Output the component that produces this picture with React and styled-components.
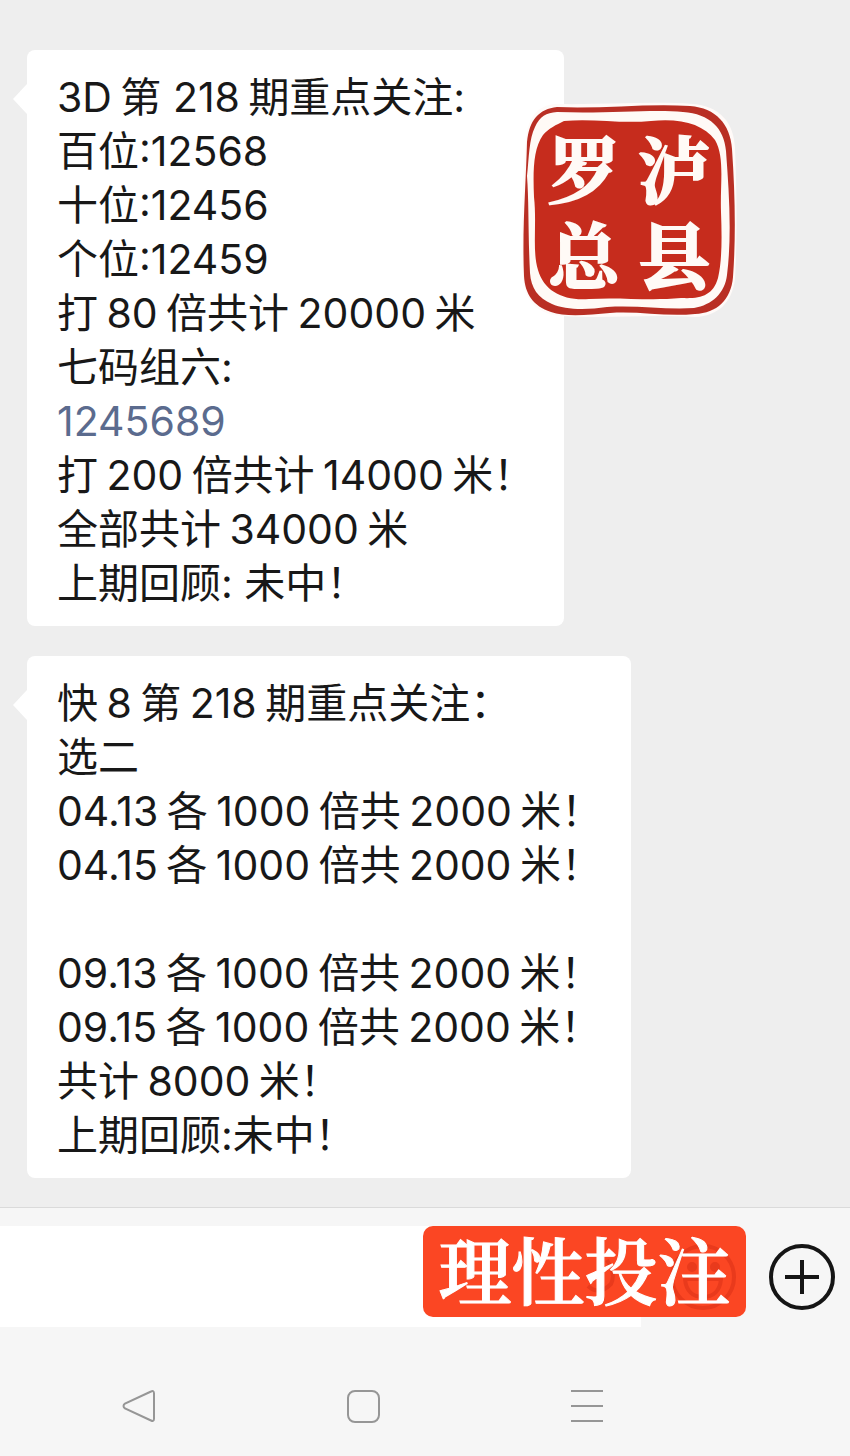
import React, { Fragment } from 'react';
import styled, { createGlobalStyle } from 'styled-components';

const GlobalStyle = createGlobalStyle`
  *, *::before, *::after { box-sizing: border-box; }
  body {
    margin: 0;
    background: #eeeeee;
    font-family: Inter, "Noto Sans CJK SC", sans-serif;
    color: #181818;
  }
`;

const Screen = styled.div`
  display: flex;
  flex-direction: column;
  min-height: 100vh;
`;

const Chat = styled.main`
  position: relative;
  flex: 1;
  display: flex;
  flex-direction: column;
  align-items: flex-start;
  gap: 30px;
  padding: 50px 27px 29px;
`;

const Bubble = styled.article`
  position: relative;
  width: ${(p) => p.$width};
  padding: 20px 0 16px 30px;
  border-radius: 8px;
  background: #ffffff;
  font-size: 41px;
  line-height: 54px;
  white-space: nowrap;

  &::before {
    content: "";
    position: absolute;
    left: -14px;
    top: 34px;
    border: solid transparent;
    border-width: 15px 14px 15px 0;
    border-right-color: #ffffff;
  }
`;

const Line = styled.p`
  margin: 0;
  min-height: 54px;
`;

/* Narrow space between Chinese characters and numerals */
const ThinSpace = styled.span`
  font-size: 30px;
  line-height: 1;
`;

const NumberLink = styled.a`
  color: #5b6b8e;
  text-decoration: none;
`;

const Seal = styled.div`
  position: absolute;
  left: 521px;
  top: 101px;
  width: 216px;
  height: 218px;
`;

const SealArt = styled.svg`
  display: block;
  width: 100%;
  height: 100%;
`;

const SealText = styled.div`
  position: absolute;
  inset: 22px 18px 24px;
  display: grid;
  grid-template-columns: 1fr 1fr;
  place-items: center;
  color: #fffaf6;
  -webkit-text-stroke: 2px #fffaf6;
  font-family: "Noto Serif CJK SC", "Noto Sans CJK SC", serif;
  font-size: 72px;
  font-weight: 700;
  line-height: 84px;
`;

const Composer = styled.footer`
  position: relative;
  display: flex;
  align-items: center;
  gap: 128px;
  padding: 18px 15px 18px 0;
  border-top: 1px solid #dadada;
  background: #f6f6f6;
`;

const MessageInput = styled.input`
  flex: 1;
  min-width: 0;
  height: 101px;
  padding: 0 30px;
  border: 0;
  outline: 0;
  background: #ffffff;
  font: inherit;
  font-size: 41px;
`;

const IconButton = styled.button`
  display: flex;
  padding: 0;
  border: 0;
  background: none;
  color: ${(p) => p.$color};
`;

const Banner = styled.div`
  position: absolute;
  right: 104px;
  top: 18px;
  width: 323px;
  height: 91px;
  border-radius: 10px;
  background: #fb4623;
`;

const BannerArt = styled.svg`
  position: absolute;
  inset: 0;
`;

const BannerText = styled.strong`
  position: relative;
  display: block;
  color: #ffffff;
  -webkit-text-stroke: 1px #ffffff;
  font-family: "Noto Serif CJK SC", "Noto Sans CJK SC", serif;
  font-size: 73px;
  font-weight: 600;
  line-height: 84px;
  text-align: center;
  white-space: nowrap;
`;

const NavBar = styled.nav`
  display: flex;
  align-items: center;
  gap: 188px;
  height: 112px;
  padding: 10px 0 0 121px;
  background: #f6f6f6;
`;

/* "_" marks a thin space, " " a full one */
const messages = [
  {
    width: '537px',
    lines: [
      '3D_第 218_期重点关注:',
      '百位:12568',
      '十位:12456',
      '个位:12459',
      '打_80_倍共计_20000_米',
      '七码组六:',
      { number: '1245689' },
      '打_200_倍共计_14000_米！',
      '全部共计_34000_米',
      '上期回顾: 未中！',
    ],
  },
  {
    width: '604px',
    lines: [
      '快_8_第_218_期重点关注：',
      '选二',
      '04.13_各_1000_倍共_2000_米！',
      '04.15_各_1000_倍共_2000_米！',
      '',
      '09.13_各_1000_倍共_2000_米！',
      '09.15_各_1000_倍共_2000_米！',
      '共计_8000_米！',
      '上期回顾:未中！',
    ],
  },
];

function SpacedText({ text }) {
  return text.split('_').map((part, i) => (
    <Fragment key={i}>
      {i > 0 && <ThinSpace> </ThinSpace>}
      {part}
    </Fragment>
  ));
}

function Message({ width, lines }) {
  return (
    <Bubble $width={width}>
      {lines.map((line, i) => (
        <Line key={i}>
          {line.number ? (
            <NumberLink href={`tel:${line.number}`}>{line.number}</NumberLink>
          ) : (
            <SpacedText text={line} />
          )}
        </Line>
      ))}
    </Bubble>
  );
}

function SealStamp() {
  return (
    <Seal>
      <SealArt viewBox="0 0 216 218" aria-hidden="true">
        <path fill="#fffaf8" d="M35 3 C80 4 130 0 172 3 C199 5 213 22 214 47 C216 95 216 144 214 178 C211 202 197 215 174 216 C125 213 86 218 42 215 C17 214 4 201 2 177 C0 131 1 83 5 38 C7 17 16 4 35 3Z" />
        <path fill="#b92f24" d="M36 6 C82 8 127 2 169 5 C195 7 209 23 211 48 C214 92 215 135 212 176 C210 199 196 212 174 213 C145 216 119 210 89 212 C67 214 44 216 30 211 C12 205 4 193 3 175 C1 128 5 82 6 41 C8 19 18 8 36 6Z" />
        <path fill="#fffaf6" d="M36 11 C85 13 132 8 162 11 C189 13 203 27 205 50 C208 91 211 134 206 174 C204 192 191 204 173 207 C145 209 117 204 86 206 C66 209 44 209 31 203 C17 197 10 187 9 172 C7 133 8 101 6 75 C8 56 8 38 14 26 C19 15 25 12 36 11Z" />
        <path fill="#c62c1d" d="M43 20 C72 17 99 23 130 20 C160 17 182 23 194 39 C204 56 199 83 200 111 C201 137 201 160 197 177 C192 195 179 198 160 197 C128 200 99 196 68 198 C42 200 23 190 17 169 C11 150 16 123 13 96 C12 71 12 48 22 34 C28 27 35 24 43 20Z" />
      </SealArt>
      <SealText>
        <span>罗</span>
        <span>泸</span>
        <span>总</span>
        <span>县</span>
      </SealText>
    </Seal>
  );
}

export default function App() {
  return (
    <>
      <GlobalStyle />
      <Screen lang="zh-CN">
        <Chat>
          {messages.map((m, i) => (
            <Message key={i} {...m} />
          ))}
          <SealStamp />
        </Chat>
        <Composer>
          <MessageInput type="text" aria-label="输入消息" />
          <IconButton type="button" aria-label="更多" $color="#151515">
            <svg width="66" height="66" viewBox="0 0 66 66" fill="none" stroke="currentColor" strokeWidth="4">
              <circle cx="33" cy="33" r="31" />
              <path d="M16 33H50M33 16V50" />
            </svg>
          </IconButton>
          <Banner>
            <BannerArt width="323" height="91" viewBox="0 0 323 91" fill="none" stroke="#e93a1c" strokeWidth="4" aria-hidden="true">
              <circle cx="280" cy="51" r="31" />
              <circle cx="269" cy="41" r="3" fill="#e93a1c" />
              <circle cx="292" cy="41" r="3" fill="#e93a1c" />
              <path d="M262 53H298C297 65 290 71 280 71S263 65 262 53Z" />
              <path d="M165 60Q176 70 188 58Q193 48 184 34" />
            </BannerArt>
            <BannerText>理性投注</BannerText>
          </Banner>
        </Composer>
        <NavBar aria-label="系统导航">
          <IconButton type="button" aria-label="返回" $color="#969696">
            <svg width="36" height="36" viewBox="0 0 36 36" fill="none" stroke="currentColor" strokeWidth="2">
              <path d="M30 3.500Q33 2 33 5.500V30.500Q33 34 30 32.500L4 20.500Q1 18 4 15.500Z" />
            </svg>
          </IconButton>
          <IconButton type="button" aria-label="主页" $color="#969696">
            <svg width="36" height="36" viewBox="0 0 36 36" fill="none" stroke="currentColor" strokeWidth="2">
              <rect x="3" y="3" width="31" height="31" rx="7" />
            </svg>
          </IconButton>
          <IconButton type="button" aria-label="最近任务" $color="#969696">
            <svg width="36" height="36" viewBox="0 0 36 36" fill="none" stroke="currentColor" strokeWidth="2">
              <path d="M2 3H34M2 18H34M2 33H34" />
            </svg>
          </IconButton>
        </NavBar>
      </Screen>
    </>
  );
}
